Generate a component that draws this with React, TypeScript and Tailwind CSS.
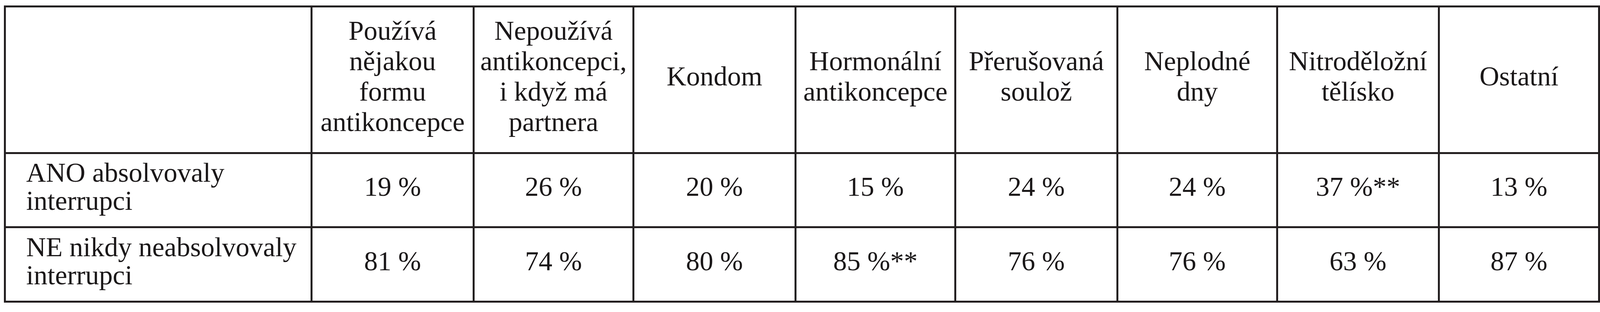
import React from "react";

const headers: string[][] = [
  ["Používá", "nějakou", "formu", "antikoncepce"],
  ["Nepoužívá", "antikoncepci,", "i když má", "partnera"],
  ["Kondom"],
  ["Hormonální", "antikoncepce"],
  ["Přerušovaná", "soulož"],
  ["Neplodné", "dny"],
  ["Nitroděložní", "tělísko"],
  ["Ostatní"],
];

const rows: { label: string[]; values: string[] }[] = [
  {
    label: ["ANO absolvovaly", "interrupci"],
    values: ["19 %", "26 %", "20 %", "15 %", "24 %", "24 %", "37 %**", "13 %"],
  },
  {
    label: ["NE nikdy neabsolvovaly", "interrupci"],
    values: ["81 %", "74 %", "80 %", "85 %**", "76 %", "76 %", "63 %", "87 %"],
  },
];

export default function App() {
  return (
    <div className="w-[4129px] h-[800px] bg-white pt-[14px] pl-[10px] font-['Liberation_Serif','Times_New_Roman',serif]">
      <div className="inline-grid bg-[#231f20] p-[5px] gap-[5px] grid-cols-[780px_410px_404px_410px_404px_410px_404px_409px_405px] grid-rows-[371px_185px_186px] text-[70px] text-[#1a1718]">
        <div className="bg-white" />
        {headers.map((lines, i) => (
          <div
            key={i}
            className="bg-white flex flex-col items-center justify-center pb-[17px] leading-[78px] text-center"
          >
            {lines.map((l, j) => (
              <span key={j} className="whitespace-nowrap">
                {l}
              </span>
            ))}
          </div>
        ))}
        {rows.map((r, ri) => (
          <React.Fragment key={ri}>
            <div className="bg-white flex flex-col justify-center pl-[52px] pb-[17px] leading-[72px]">
              {r.label.map((l, j) => (
                <span key={j} className="whitespace-nowrap">
                  {l}
                </span>
              ))}
            </div>
            {r.values.map((v, vi) => (
              <div
                key={vi}
                className="bg-white flex items-center justify-center pb-[17px] leading-[72px] whitespace-nowrap"
              >
                {v}
              </div>
            ))}
          </React.Fragment>
        ))}
      </div>
    </div>
  );
}
